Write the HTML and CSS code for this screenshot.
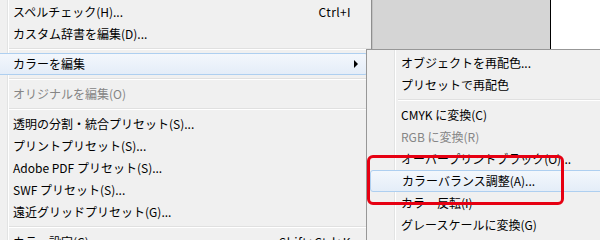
FILE: index.html
```html
<!DOCTYPE html>
<html lang="ja">
<head>
    <meta charset="UTF-8">
    <title>カラーを編集</title>
    <link rel="stylesheet" href="styles.css">
</head>
<body>
    <div class="screen">
        <!-- main menu -->
        <div class="menu">
            <div class="item"><span>スペルチェック(H)...</span><span class="key">Ctrl+I</span></div>
            <div class="item"><span>カスタム辞書を編集(D)...</span></div>
            <div class="sep"></div>
            <div class="item active"><span>カラーを編集</span><span class="arrow"></span></div>
            <div class="sep"></div>
            <div class="item disabled"><span>オリジナルを編集(O)</span></div>
            <div class="sep"></div>
            <div class="item"><span>透明の分割・統合プリセット(S)...</span></div>
            <div class="item"><span>プリントプリセット(S)...</span></div>
            <div class="item"><span>Adobe PDF プリセット(S)...</span></div>
            <div class="item"><span>SWF プリセット(S)...</span></div>
            <div class="item"><span>遠近グリッドプリセット(G)...</span></div>
            <div class="sep"></div>
            <div class="item"><span>カラー設定(C)...</span><span class="key">Shift+Ctrl+K</span></div>
        </div>
        <div class="desk"></div>
        <div class="paper"></div>

        <!-- submenu -->
        <div class="submenu">
            <div class="item"><span>オブジェクトを再配色...</span></div>
            <div class="item"><span>プリセットで再配色</span></div>
            <div class="sep"></div>
            <div class="item"><span>CMYK に変換(C)</span></div>
            <div class="item disabled"><span>RGB に変換(R)</span></div>
            <div class="item"><span>オーバープリントブラック(O)...</span></div>
            <div class="item active"><span>カラーバランス調整(A)...</span></div>
            <div class="item"><span>カラー反転(I)</span></div>
            <div class="item"><span>グレースケールに変換(G)</span></div>
        </div>

        <!-- annotation -->
        <div class="mark"></div>
    </div>
</body>
</html>
```

FILE: styles.css
```css
body {
    margin: 0;
    font-family: "Noto Sans CJK JP", "Noto Sans", sans-serif;
    font-size: 12px;
    color: #000;
}

.screen {
    position: relative;
    display: flex;
    width: 600px;
    height: 240px;
    overflow: hidden;
}

.menu {
    width: 371px;
    flex: none;
    padding-top: 1px;
    border-right: 1px solid #8e8e8e;
    background: linear-gradient(to right, #f0f0f0 7px, #e2e3e3 7px, #e2e3e3 8px, #ffffff 8px, #ffffff 9px, #f0f0f0 9px);
}

.desk {
    width: 177px;
    flex: none;
    background-color: #d5d5d5;
    border-left: 1px solid #c2c2c2;
    border-right: 1px solid #000;
}

.paper {
    flex: 1;
    background-color: #fff;
}

.item {
    display: flex;
    justify-content: space-between;
    align-items: center;
    height: 22px;
    line-height: 22px;
    padding: 0 20px 0 13px;
    white-space: nowrap;
    box-sizing: border-box;
}

.key {
    letter-spacing: 0.4px;
}

.item.disabled {
    color: #858585;
}

.menu .item.active {
    margin: 0 3px 0 -4px;
    padding: 0 9px 0 16px;
    border: 1px solid #aecff0;
    border-radius: 3px;
    background: linear-gradient(to bottom, #f3f7fc, #e4edf8);
}

.arrow {
    width: 0;
    height: 0;
    border-left: 4px solid #000;
    border-top: 4px solid transparent;
    border-bottom: 4px solid transparent;
}

.sep {
    height: 8px;
    margin-left: 9px;
    background: linear-gradient(to bottom, transparent 3px, #e0e0e0 3px, #e0e0e0 4px, #ffffff 4px, #ffffff 5px, transparent 5px);
}

.submenu {
    position: absolute;
    left: 366px;
    top: 49px;
    width: 260px;
    height: 200px;
    padding-top: 2px;
    border: 1px solid #979797;
    background: linear-gradient(to right, #f0f0f0 27px, #e2e3e3 27px, #e2e3e3 28px, #ffffff 28px, #ffffff 29px, #f0f0f0 29px);
}

.submenu .item {
    padding-left: 34px;
}

.submenu .item.active {
    margin: 0 3px;
    padding-left: 31px;
    border: 1px solid #aecff0;
    border-radius: 3px;
    background: linear-gradient(to bottom, #f3f7fc, #e4edf8);
}

.submenu .sep {
    margin-left: 31px;
}

.mark {
    position: absolute;
    left: 367px;
    top: 155px;
    width: 191px;
    height: 44px;
    border: 3px solid #e60012;
    border-radius: 6px;
}
```
